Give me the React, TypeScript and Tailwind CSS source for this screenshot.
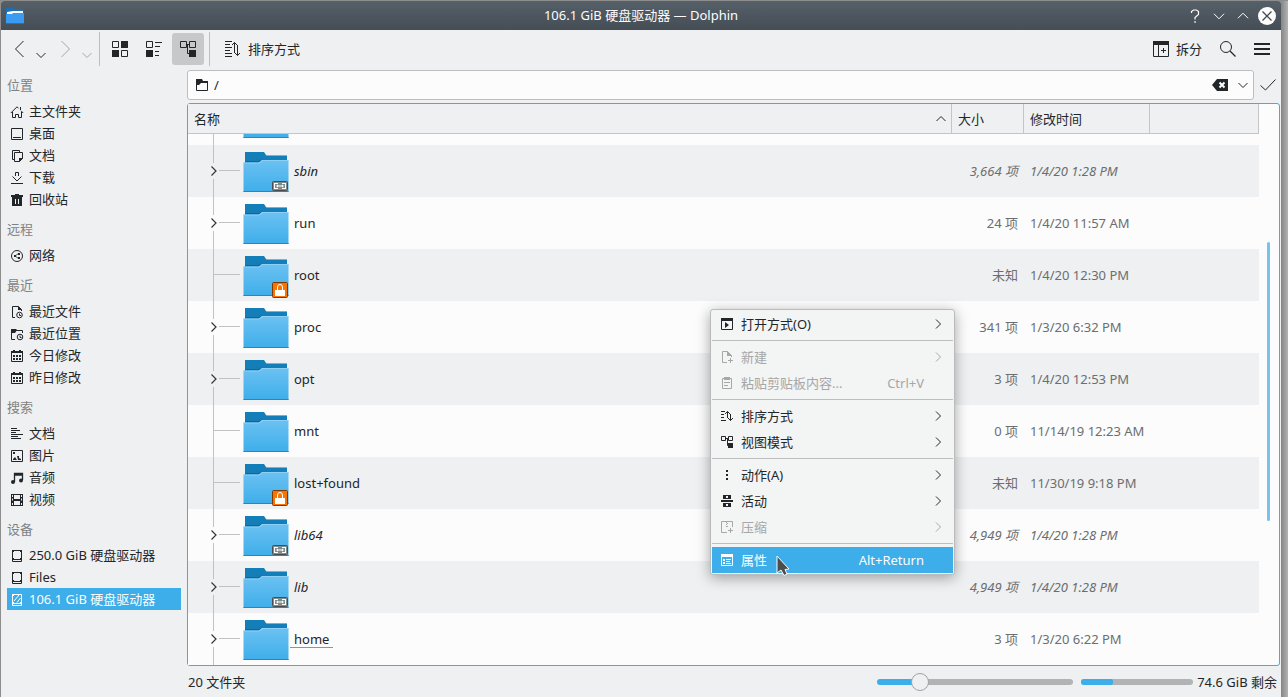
import type { ReactNode } from 'react';
import clsx from 'clsx';

type IconName =
  | 'home' | 'desktop' | 'documents' | 'download' | 'trash' | 'network'
  | 'recentFile' | 'recentFolder' | 'calendar' | 'lines' | 'image' | 'music'
  | 'video' | 'drive' | 'rootDrive' | 'openWith' | 'newFile' | 'paste' | 'sort'
  | 'tree' | 'dots' | 'activities' | 'archive' | 'properties';

// 16px glyphs, the drawing sits in the 2..14 square
const ICONS: Record<IconName, ReactNode> = {
  home: (
    <>
      <path d="M3.5 8v5.5h3v-3h3v3h3V8M1.8 9 8 2.8l1.5 1.5M12 6.8 14.2 9" />
      <path d="M11 3h1v3h-1z" fill="currentColor" stroke="none" />
    </>
  ),
  desktop: <path d="M2.5 2.5h11v11h-11zM4 11.5h8" />,
  documents: (
    <>
      <path d="M5 11.5H3.5v-9h7V4M5.5 4.5h8v6l-3 3h-5z" />
      <path d="M10 10h4l-4 4z" fill="currentColor" stroke="none" />
    </>
  ),
  download: <path d="M2 13.5h12M6.5 6V2.5h3V6M3.5 6.5 8 11l4.5-4.5" />,
  trash: (
    <path
      d="M6 2h4v1h4v2H2V3h4zM3 5h10v9H3zM6 7v5h1V7zM9 7v5h1V7z"
      fill="currentColor"
      fillRule="evenodd"
      stroke="none"
    />
  ),
  network: (
    <>
      <circle cx="8" cy="8" r="5.5" />
      <path d="M9.5 5.5 6 8l3.5 2.5" strokeWidth="0.8" />
      <path d="M5 7h2v2H5zM9 5h2v2H9zM9 9h2v2H9z" fill="currentColor" stroke="none" />
    </>
  ),
  recentFile: (
    <>
      <path d="M6 13.5H3.5v-11h6l3 3V7" />
      <path d="M9 2l4 4H9z" fill="currentColor" stroke="none" />
      <circle cx="10.5" cy="11" r="2.8" />
      <path d="M10.5 9.5V11.5H12" />
    </>
  ),
  recentFolder: (
    <>
      <path d="M6 13.5H2.5v-9h11V7" />
      <path d="M2 3h5l1 1-2 3H2z" fill="currentColor" stroke="none" />
      <circle cx="11" cy="11" r="2.8" />
      <path d="M11 9.5V11.5H12.5" />
    </>
  ),
  calendar: (
    <>
      <path d="M2.5 3.5h11v10h-11z" />
      <path
        d="M2 3h12v2H2zM4 2h2v2H4zM10 2h2v2h-2zM4 7h2v2H4zM7 7h2v2H7zM10 7h2v2h-2zM4 10h2v2H4zM7 10h2v2H7zM10 10h2v2h-2z"
        fill="currentColor"
        stroke="none"
      />
    </>
  ),
  lines: <path d="M2 2.5h6M2 4.5h9M2 6.5h5M2 8.5h12M2 10.5h7M2 12.5h10" />,
  image: (
    <>
      <path d="M2.5 2.5h11v11h-11z" />
      <path d="M4 4h2v2H4zM4 12v-1l2-2 2 3zM8 8h2v2l2 1v1H9z" fill="currentColor" stroke="none" />
    </>
  ),
  music: (
    <>
      <path d="M5.5 12V3.5h8V10M5.5 5h8" strokeWidth="1.3" />
      <circle cx="4" cy="12" r="2" fill="currentColor" stroke="none" />
      <circle cx="12" cy="10.5" r="2" fill="currentColor" stroke="none" />
    </>
  ),
  video: (
    <path
      d="M2 2h12v12H2zM5 3v4h6V3zM5 9v4h6V9zM3 3v2h1V3zM3 6.5v2h1v-2zM3 11v2h1v-2zM12 3v2h1V3zM12 6.5v2h1v-2zM12 11v2h1v-2z"
      fill="currentColor"
      fillRule="evenodd"
      stroke="none"
    />
  ),
  drive: (
    <>
      <path d="M3.5 2.5h9v11h-9zM5 11.5h6" />
      <path d="M3 2h2v2H3zM11 2h2v2h-2zM3 10h2v2H3zM11 10h2v2h-2z" fill="currentColor" stroke="none" />
    </>
  ),
  rootDrive: (
    <>
      <path d="M3.5 2.5h9v11h-9zM4 11.5h8M5 9l5-6M8 10.5l3.500-4.500" />
      <path d="M3 2h2v2H3zM3 10h2v2H3zM11 10h2v2h-2z" fill="currentColor" stroke="none" />
    </>
  ),
  openWith: (
    <>
      <path d="M2.5 3.5h11v10h-11z" />
      <path d="M2 2h12v3H2zM6 6l4 3-4 3z" fill="currentColor" stroke="none" />
    </>
  ),
  newFile: (
    <>
      <path d="M8 13.5H3.5v-11h5l4 4V8M11.5 9v5M9 11.5h5" />
      <path d="M8 2l5 5H8z" fill="currentColor" stroke="none" />
    </>
  ),
  paste: (
    <>
      <path d="M3.5 3.5h9v10h-9zM5 7.5h6M5 10.5h4" />
      <path d="M5 2h6v3H5z" fill="currentColor" stroke="none" />
    </>
  ),
  sort: <path d="M2 3.5h4M2 6.5h3M2 9.5h3M2 12.5h5M8.5 10V3.5M6 6l2.5-2.5L11 6M11.5 6v6.5M9 10l2.5 2.500L14 10" />,
  tree: (
    <>
      <path d="M2.5 2.5h4v4h-4zM9.5 2.5h4v4h-4zM7 4.5h2M8.5 5v6.5H10" />
      <path d="M9 9h5v5H9z" fill="currentColor" stroke="none" />
    </>
  ),
  dots: <path d="M7 3h2v2H7zM7 7h2v2H7zM7 11h2v2H7z" fill="currentColor" stroke="none" />,
  activities: (
    <path
      d="M4 2h8v4H4zM7 3v2h2V3zM2 7h12v2H2zM4 10h8v4H4zM7 11v2h2v-2z"
      fill="currentColor"
      fillRule="evenodd"
      stroke="none"
    />
  ),
  archive: <path d="M8 13.5H2.5v-11h11V8M7 3.5h1M8 4.5h1M7 5.5h1M7 7.5h2M11.5 9v5M9 11.5h5" />,
  properties: (
    <>
      <path d="M2.5 3.5h11v10h-11zM7 7.5h5M7 9.5h4M7 11.5h5" />
      <path d="M2 2h12v3H2zM4 7h2v2H4zM4 10h2v2H4z" fill="currentColor" stroke="none" />
    </>
  ),
};

function Icon({ name, className }: { name: IconName; className?: string }) {
  return (
    <svg viewBox="0 0 16 16" className={clsx('size-4 shrink-0', className)} fill="none" stroke="currentColor" aria-hidden="true">
      {ICONS[name]}
    </svg>
  );
}

function Chevron({ dir, className }: { dir: 'up' | 'down' | 'right'; className?: string }) {
  const paths = {
    up: 'M3.5 10 8 5.5l4.5 4.5',
    down: 'M3.5 6 8 10.5 12.5 6',
    right: 'M6 3.5 10.5 8 6 12.5',
  };
  return (
    <svg viewBox="0 0 16 16" className={clsx('shrink-0', className)} fill="none" stroke="currentColor" aria-hidden="true">
      <path d={paths[dir]} vectorEffect="non-scaling-stroke" />
    </svg>
  );
}

const PLACES: { title: string; items: { icon: IconName; label: string; active?: boolean }[] }[] = [
  {
    title: '位置',
    items: [
      { icon: 'home', label: '主文件夹' },
      { icon: 'desktop', label: '桌面' },
      { icon: 'documents', label: '文档' },
      { icon: 'download', label: '下载' },
      { icon: 'trash', label: '回收站' },
    ],
  },
  { title: '远程', items: [{ icon: 'network', label: '网络' }] },
  {
    title: '最近',
    items: [
      { icon: 'recentFile', label: '最近文件' },
      { icon: 'recentFolder', label: '最近位置' },
      { icon: 'calendar', label: '今日修改' },
      { icon: 'calendar', label: '昨日修改' },
    ],
  },
  {
    title: '搜索',
    items: [
      { icon: 'lines', label: '文档' },
      { icon: 'image', label: '图片' },
      { icon: 'music', label: '音频' },
      { icon: 'video', label: '视频' },
    ],
  },
  {
    title: '设备',
    items: [
      { icon: 'drive', label: '250.0 GiB 硬盘驱动器' },
      { icon: 'drive', label: 'Files' },
      { icon: 'rootDrive', label: '106.1 GiB 硬盘驱动器', active: true },
    ],
  },
];

type Entry = {
  name: string;
  size: string;
  date: string;
  badge?: 'link' | 'lock';
  leaf?: boolean;
  current?: boolean;
};

const ENTRIES: Entry[] = [
  { name: 'sbin', size: '3,664 项', date: '1/4/20 1:28 PM', badge: 'link' },
  { name: 'run', size: '24 项', date: '1/4/20 11:57 AM' },
  { name: 'root', size: '未知', date: '1/4/20 12:30 PM', badge: 'lock', leaf: true },
  { name: 'proc', size: '341 项', date: '1/3/20 6:32 PM' },
  { name: 'opt', size: '3 项', date: '1/4/20 12:53 PM' },
  { name: 'mnt', size: '0 项', date: '11/14/19 12:23 AM', leaf: true },
  { name: 'lost+found', size: '未知', date: '11/30/19 9:18 PM', badge: 'lock', leaf: true },
  { name: 'lib64', size: '4,949 项', date: '1/4/20 1:28 PM', badge: 'link' },
  { name: 'lib', size: '4,949 项', date: '1/4/20 1:28 PM', badge: 'link' },
  { name: 'home', size: '3 项', date: '1/3/20 6:22 PM', current: true },
];

type MenuEntry =
  | 'separator'
  | { icon: IconName; label: string; shortcut?: string; disabled?: boolean; active?: boolean };

const MENU: MenuEntry[] = [
  { icon: 'openWith', label: '打开方式(O)' },
  'separator',
  { icon: 'newFile', label: '新建', disabled: true },
  { icon: 'paste', label: '粘贴剪贴板内容...', shortcut: 'Ctrl+V', disabled: true },
  'separator',
  { icon: 'sort', label: '排序方式' },
  { icon: 'tree', label: '视图模式' },
  'separator',
  { icon: 'dots', label: '动作(A)' },
  { icon: 'activities', label: '活动' },
  { icon: 'archive', label: '压缩', disabled: true },
  'separator',
  { icon: 'properties', label: '属性', shortcut: 'Alt+Return', active: true },
];

function Folder({ badge }: { badge?: 'link' | 'lock' }) {
  return (
    <svg viewBox="0 0 48 48" className="size-12 shrink-0" aria-hidden="true">
      <defs>
        <linearGradient id="folder" x1="0" y1="0" x2="0" y2="1">
          <stop offset="0" stopColor="#6cc1f2" />
          <stop offset="1" stopColor="#3eaeea" />
        </linearGradient>
      </defs>
      <path d="M3 5h19l2 3h21v12H3z" fill="#147eb8" />
      <path d="M24 8h21v1H24.5z" fill="#6fb4d9" />
      <path d="M3 14h14l3-2v4H3z" fill="#0f6799" />
      <path d="M1.5 15.5H17l3-2.5h26.5v32h-45z" fill="url(#folder)" />
      <path d="M1.5 15.5H17l3-2.5h26.5v1H20.5l-3 2.5h-16z" fill="#8fcff5" />
      <path d="M1.5 44h45v1h-45z" fill="#2a86b8" />
      {badge === 'link' && (
        <>
          <rect x="30.5" y="34.5" width="15" height="9" rx="1" fill="#7f8c8d" stroke="#4d4d4d" />
          <path
            d="M32 36h4v1h-3v4h3v1h-4zM44 36h-4v1h3v4h-3v1h4zM34 39l2-1.500v1h4v-1l2 1.500-2 1.500v-1h-4v1z"
            fill="#fff"
          />
        </>
      )}
      {badge === 'lock' && (
        <>
          <rect x="30.5" y="31.5" width="15" height="15" rx="1" fill="#f67400" stroke="#7b3a05" />
          <path d="M35.5 40v-4a2.5 2.5 0 0 1 5 0v4" fill="none" stroke="#fff" />
          <path d="M33 39h10v6H33z" fill="#fff" />
        </>
      )}
    </svg>
  );
}

function Branch({ leaf }: { leaf?: boolean }) {
  return (
    <svg viewBox="0 0 52 52" className="size-13 shrink-0" fill="none" aria-hidden="true">
      {leaf ? (
        <path d="M25.5 0v52M26 25.5h26" stroke="#bfc1c3" />
      ) : (
        <>
          <path d="M25.5 0v18M25.5 34v18M31 25.5h21" stroke="#bfc1c3" />
          <path d="M23.5 21.5 28 26l-4.5 4.5" stroke="#31363b" strokeWidth="1.2" />
        </>
      )}
    </svg>
  );
}

function TitleBar() {
  return (
    <header className="grid h-[29px] grid-cols-[1fr_auto_1fr] items-center bg-linear-to-b from-[#566068] to-[#454d55] text-[#fcfcfc]">
      <svg viewBox="0 0 20 16" className="ml-1 h-4 w-5" aria-hidden="true">
        <path d="M1 0h7l1 1h9v5H1z" fill="#1c6fb5" />
        <path d="M2 4l6-1h10v4H2z" fill="#fff" />
        <path d="M1 6h6l1-1h11v11H1z" fill="#3a9bf0" />
        <path d="M1 15h18v1H1z" fill="#1b73c9" />
      </svg>
      <h1 className="pb-0.5">106.1 GiB 硬盘驱动器 — Dolphin</h1>
      <div className="flex items-center justify-end gap-1.5 pr-[5px]">
        <button type="button" aria-label="帮助">
          <svg viewBox="0 0 18 18" className="size-[18px]" fill="none" stroke="currentColor" aria-hidden="true">
            <path d="M5.5 6V4.500L7.500 3h3l2 1.500v3L9 10.500V12.500" strokeWidth="1.2" />
            <path d="M8.3 15h1.5" strokeWidth="1.5" />
          </svg>
        </button>
        <button type="button" aria-label="最小化">
          <Chevron dir="down" className="size-[18px]" />
        </button>
        <button type="button" aria-label="最大化">
          <Chevron dir="up" className="size-[18px]" />
        </button>
        <button type="button" aria-label="关闭">
          <svg viewBox="0 0 18 18" className="size-[18px]" aria-hidden="true">
            <circle cx="9" cy="9" r="9" fill="#fcfcfc" />
            <path d="m4.500 4.500 9 9M13.500 4.500l-9 9" stroke="#3d444b" strokeWidth="1.2" />
          </svg>
        </button>
      </div>
    </header>
  );
}

function ToolSeparator() {
  return <div className="mr-1 ml-[5px] h-[34px] w-px bg-[#bcbec0]" />;
}

function ToolBar() {
  return (
    <div className="flex h-[38px] items-center justify-between">
      <div className="flex items-center">
        <div className="flex items-center gap-1.5 pr-[3px] pl-1">
          <div className="flex items-center">
            <button type="button" aria-label="后退" className="grid h-8 w-7 place-items-center">
              <svg viewBox="0 0 10 16" className="h-4 w-2.5" fill="none" stroke="currentColor" aria-hidden="true">
                <path d="M9.5 0 1.5 8l8 8" />
              </svg>
            </button>
            <button type="button" aria-label="后退历史" className="grid w-3 place-items-center">
              <Chevron dir="down" className="mt-3 size-4" />
            </button>
          </div>
          <div className="flex items-center text-[#a4a7a9]">
            <button type="button" aria-label="前进" disabled className="grid h-8 w-7 place-items-center">
              <svg viewBox="0 0 10 16" className="h-4 w-2.5" fill="none" stroke="currentColor" aria-hidden="true">
                <path d="m1.5 0 8 8-8 8" />
              </svg>
            </button>
            <button type="button" aria-label="前进历史" disabled className="grid w-3 place-items-center">
              <Chevron dir="down" className="mt-3 size-4" />
            </button>
          </div>
        </div>
        <ToolSeparator />
        <div className="flex gap-0.5">
          <button type="button" aria-label="图标" className="grid size-8 place-items-center rounded-[3px]">
            <svg viewBox="0 0 16 16" className="size-4" fill="none" stroke="currentColor" aria-hidden="true">
              <path d="M.5.5h6v6h-6zM9.5 9.5h6v6h-6z" />
              <path d="M9 0h7v7H9zM0 9h7v7H0z" fill="currentColor" stroke="none" />
            </svg>
          </button>
          <button type="button" aria-label="紧凑" className="grid size-8 place-items-center rounded-[3px]">
            <svg viewBox="0 0 16 16" className="size-4" fill="none" stroke="currentColor" aria-hidden="true">
              <path d="M.5.5h6v6h-6zM9 1.5h7M9 5.5h5M9 10.5h4M9 14.5h4" />
              <path d="M0 9h7v7H0z" fill="currentColor" stroke="none" />
            </svg>
          </button>
          <button type="button" aria-label="详细信息" aria-pressed="true" className="grid size-8 place-items-center rounded-[3px] bg-[#c6c8c9]">
            <svg viewBox="0 0 16 16" className="size-4" fill="none" stroke="currentColor" aria-hidden="true">
              <path d="M.5.5h6v6h-6zM9.5.5h6v6h-6zM7 3.5h2M7.5 4v8.5H9" />
              <path d="M9 9h7v7H9z" fill="currentColor" stroke="none" />
            </svg>
          </button>
        </div>
        <ToolSeparator />
        <button type="button" className="flex h-8 items-center gap-[7px] px-[11px]">
          <svg viewBox="0 0 16 16" className="size-4" fill="none" stroke="currentColor" aria-hidden="true">
            <path d="M0 .5h7M0 3.5h5M0 6.5h7M0 9.5h5M0 12.5h7M0 15.5h7M9.5 12V1.5M7 4l2.5-2.500L12 4M12.5 4v10.500M10 12l2.5 2.500L15 12" />
          </svg>
          排序方式
        </button>
      </div>
      <div className="flex items-center gap-[18px] pr-[11px]">
        <button type="button" className="flex h-8 items-center gap-[7px]">
          <svg viewBox="0 0 16 16" className="size-4" fill="none" stroke="currentColor" aria-hidden="true">
            <path d="M.5.5h15v15H.5zM5.5 4v12M8 9.5h5M10.5 7v5" />
            <path d="M0 0h16v4H0z" fill="currentColor" stroke="none" />
          </svg>
          拆分
        </button>
        <button type="button" aria-label="搜索" className="grid h-8 place-items-center">
          <svg viewBox="0 0 16 16" className="size-4" fill="none" stroke="currentColor" aria-hidden="true">
            <circle cx="6" cy="6" r="5.5" />
            <path d="m10 10 5.500 5.500" strokeWidth="1.2" />
          </svg>
        </button>
        <button type="button" aria-label="菜单" className="grid h-8 place-items-center">
          <svg viewBox="0 0 16 16" className="size-4" aria-hidden="true">
            <path d="M0 2h16v2H0zM0 7h16v2H0zM0 12h16v2H0z" fill="currentColor" />
          </svg>
        </button>
      </div>
    </div>
  );
}

function PlacesPanel() {
  return (
    <nav className="w-[186px] shrink-0 px-1.5 pt-1.5">
      {PLACES.map((section) => (
        <section key={section.title} className="mb-2">
          <h2 className="mb-1 h-[22px] leading-[22px] text-[#7f8284]">{section.title}</h2>
          <ul>
            {section.items.map((item) => (
              <li key={item.label}>
                <a
                  href="#"
                  className={clsx(
                    'flex h-[22px] items-center gap-1 pl-0.5 whitespace-nowrap',
                    item.active && 'bg-[#3daee9] text-[#fcfcfc]',
                  )}
                >
                  <Icon name={item.icon} className="mt-0.5" />
                  {item.label}
                </a>
              </li>
            ))}
          </ul>
        </section>
      ))}
    </nav>
  );
}

function LocationBar() {
  return (
    <div className="flex items-center">
      <div className="flex h-[30px] flex-1 items-center rounded-[3px] border border-[#bcbec0] bg-[#fcfcfc] pr-0.5 pl-[7px]">
        <svg viewBox="0 0 14 14" className="size-3.5" aria-hidden="true">
          <path d="M1.5 3.5h11v9h-11z" fill="none" stroke="currentColor" />
          <path d="M1 1h6l1 2h5v2H6L4 7H1z" fill="currentColor" />
        </svg>
        <input
          aria-label="位置"
          defaultValue="/"
          className="min-w-0 flex-1 bg-transparent pl-[5px] outline-none"
        />
        <button type="button" aria-label="清除" className="px-[7px]">
          <svg viewBox="0 0 16 12" className="h-3 w-4" aria-hidden="true">
            <path d="M5 0h11v12H5L0 6z" fill="currentColor" />
            <path d="m7.5 3.5 5 5M12.5 3.5l-5 5" stroke="#fcfcfc" strokeWidth="2" />
          </svg>
        </button>
        <button type="button" aria-label="历史位置">
          <Chevron dir="down" className="size-4" />
        </button>
      </div>
      <button type="button" aria-label="前往" className="grid w-[27px] place-items-center">
        <svg viewBox="0 0 16 12" className="h-3 w-4" fill="none" stroke="currentColor" aria-hidden="true">
          <path d="m.5 6.5 5 4.5L15.5.5" />
        </svg>
      </button>
    </div>
  );
}

function FileTable() {
  const th = 'border-r border-b border-[#c3c5c6] bg-[#eff0f1] px-1.5 text-left font-normal';
  return (
    <table className="w-full table-fixed border-separate border-spacing-0">
      <thead>
        <tr className="h-[30px]">
          <th className={th} aria-sort="ascending">
            <span className="flex items-center justify-between">
              名称
              <Chevron dir="up" className="-mr-1 size-4" />
            </span>
          </th>
          <th className={clsx(th, 'w-[72px]')}>大小</th>
          <th className={clsx(th, 'w-[126px]')}>修改时间</th>
          <th className={clsx(th, 'w-[109px]')} aria-label="其他" />
        </tr>
      </thead>
      <tbody>
        {/* tail of the row that is scrolled out under the header */}
        <tr>
          <td colSpan={4} className="p-0">
            <div className="flex h-[11px] items-end overflow-hidden">
              <Branch leaf />
              <div className="pb-1 pl-0.5">
                <Folder />
              </div>
            </div>
          </td>
        </tr>
        {ENTRIES.map((entry) => (
          <tr key={entry.name} className={clsx('h-13 odd:bg-[#fcfcfc] even:bg-[#eff0f1]', entry.badge === 'link' && 'italic')}>
            <td className="p-0">
              <div className="flex items-center">
                <Branch leaf={entry.leaf} />
                <div className="pl-0.5">
                  <Folder badge={entry.badge} />
                </div>
                <span
                  className={clsx(
                    'border-b px-1 pt-0.5 leading-[15px]',
                    entry.current ? 'border-[#3daee9]' : 'border-transparent',
                  )}
                >
                  {entry.name}
                </span>
              </div>
            </td>
            <td className="p-0 pr-1.5 text-right text-[#6b6e70]">{entry.size}</td>
            <td className="p-0 pl-1.5 whitespace-nowrap text-[#6b6e70]">{entry.date}</td>
            <td />
          </tr>
        ))}
      </tbody>
    </table>
  );
}

function StatusBar() {
  return (
    <footer className="flex flex-1 items-center justify-between pr-1 pl-px">
      <span>20 文件夹</span>
      <div className="flex items-center">
        <input
          type="range"
          aria-label="缩放"
          min={0}
          max={16}
          defaultValue={3}
          className="h-1.5 w-[196px] appearance-none rounded-full bg-[linear-gradient(to_right,#3daee9_42px,#b1b3b5_42px)] [&::-webkit-slider-thumb]:size-[18px] [&::-webkit-slider-thumb]:appearance-none [&::-webkit-slider-thumb]:rounded-full [&::-webkit-slider-thumb]:border [&::-webkit-slider-thumb]:border-[#9fa1a3] [&::-webkit-slider-thumb]:bg-[#eff0f1]"
        />
        <div className="ml-2 h-1.5 w-28 overflow-hidden rounded-full bg-[#b1b3b5]">
          <div className="h-full w-[28%] rounded-r-xs bg-[#3daee9]" />
        </div>
        <span className="ml-1">74.6 GiB 剩余</span>
      </div>
    </footer>
  );
}

function ContextMenu() {
  return (
    <div
      role="menu"
      className="absolute top-[309px] left-[710px] w-[245px] rounded-[3px] border border-[#b9bbbc] bg-[#f3f4f4] p-px shadow-[0_3px_14px_rgba(0,0,0,0.35)]"
    >
      {MENU.map((item, i) =>
        item === 'separator' ? (
          <div key={i} role="separator" className="my-[3px] h-px bg-[#bcbebf]" />
        ) : (
          <button
            key={i}
            type="button"
            role="menuitem"
            disabled={item.disabled}
            className={clsx(
              'flex h-[26px] w-full items-center gap-1.5 pl-[7px] text-left',
              item.disabled && 'text-[#a5a7a8]',
              item.active && 'bg-[#3daee9] text-[#fcfcfc]',
            )}
          >
            <Icon name={item.icon} />
            <span className="flex-1">{item.label}</span>
            {item.shortcut ? (
              <span className="pr-[29px]">{item.shortcut}</span>
            ) : (
              <Chevron dir="right" className="mr-[7px] size-4" />
            )}
          </button>
        ),
      )}
    </div>
  );
}

export default function App() {
  return (
    <div className="relative flex min-h-screen bg-[#8d8d8d] pt-px pl-px font-['Noto_Sans','Noto_Sans_CJK_SC',sans-serif] text-[13px] leading-[18px] text-[#232629]">
      <div className="flex min-w-0 flex-1 flex-col overflow-hidden rounded-t-[3px] bg-[#eff0f1]">
        <TitleBar />
        <ToolBar />
        <div className="flex flex-1">
          <PlacesPanel />
          <main className="flex min-w-0 flex-1 flex-col pt-0.5">
            <LocationBar />
            <div className="mt-[3px] mr-px flex rounded-[3px] border border-[#3daee9] bg-[#fcfcfc]">
              <div className="min-w-0 flex-1">
                <FileTable />
              </div>
              <div className="w-5 pt-[138px] pl-2">
                <div className="h-[279px] w-[3px] rounded-full bg-[#77c3eb]" />
              </div>
            </div>
            <StatusBar />
          </main>
        </div>
      </div>
      <div className="w-[7px] bg-linear-to-r from-[#858585] to-[#b4b4b4]" />

      <ContextMenu />
      <svg viewBox="0 0 14 22" className="absolute top-[555px] left-[776px] h-[22px] w-3.5" aria-hidden="true">
        <path d="M1 1v17l4-3 3 5.500 3-1.500-2-4.500 4-.5z" fill="#4d4d4d" stroke="#fcfcfc" />
      </svg>
    </div>
  );
}
